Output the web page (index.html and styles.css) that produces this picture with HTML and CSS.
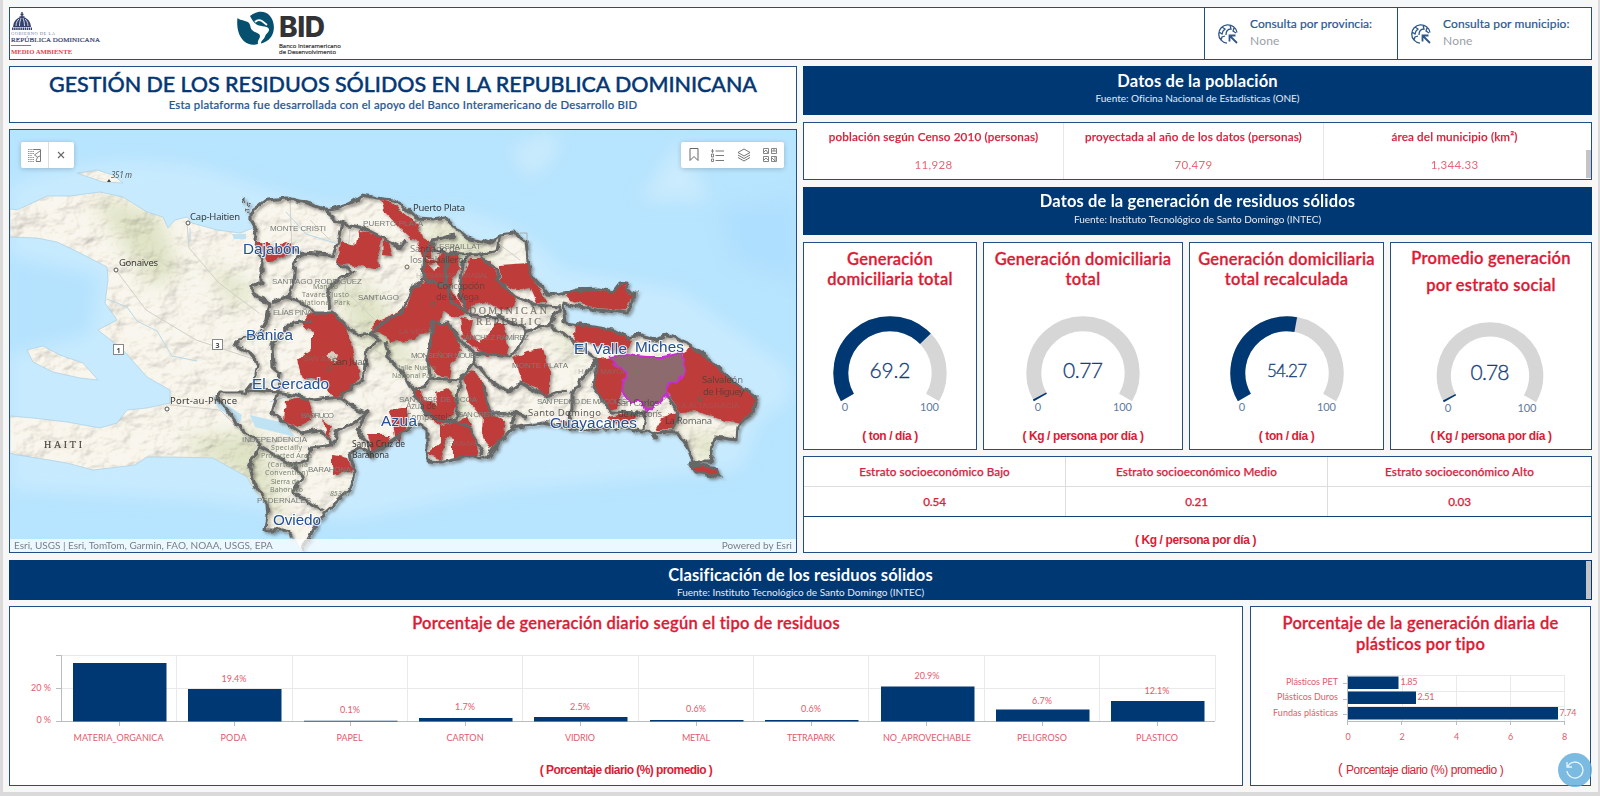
FILE: index.html
```html
<!DOCTYPE html>
<html lang="es">
<head>
<meta charset="utf-8">
<title>Gestión de los residuos sólidos</title>
<link rel="stylesheet" href="styles.css">
</head>
<body>
<div class="page">
  <header class="panel header">
    <div class="logos">
      <div class="gov">
        <svg class="dome" width="22" height="19" viewBox="0 0 22 19"><path d="M11 0v6M9.500 2.500h3M8.500 5h5" stroke="#34406f" stroke-width="1.400"/><path d="M2 15a9 10 0 0 1 18 0z" fill="#34406f"/><path d="M5 14c0-4 2-6 3-7M8.500 14c0-4 1-6 1.500-8M13.500 14c0-4-1-6-1.500-8M17 14c0-4-2-6-3-7" stroke="#fff" stroke-width=".8" fill="none"/><path d="M1 16.800h20" stroke="#34406f" stroke-width="2.400" stroke-dasharray="1.500 .6"/></svg>
        <div class="gov-a">GOBIERNO DE LA</div>
        <div class="gov-b">REPÚBLICA DOMINICANA</div>
        <div class="gov-line"></div>
        <div class="gov-c">MEDIO AMBIENTE</div>
      </div>
      <div class="bid">
        <svg width="38" height="36" viewBox="0 0 38 36"><path d="M.5 7C4 10 9 9 12 12c2 3 1 5 3 7 3 3 8 3 8 6 0 3-3 4-2 8-9 3-17-3-19.500-12C0 16 0 11 .5 7z" fill="#05506f"/><path d="M13 5C19 0 28-1 33 5c5 6 5 15 1 21-3 4-7 6-10 6.500 0-3 3-4 4-7 1-3 4-4 4-7 0-2-3-3-5-3l-5-1c-4-1-6-4-9-9.500z" fill="#05506f"/><path d="M18 11c2-2 5-2 7-1l5 4" stroke="#fff" stroke-width="1.800" fill="none"/></svg>
        <div class="bid-text"><div class="bid-name">BID</div><div class="bid-sub">Banco Interamericano<br>de Desenvolvimento</div></div>
      </div>
    </div>
    <div class="query q1">
      <svg class="globe" width="22" height="22" viewBox="0 0 22 22"><use href="#globe"/></svg>
      <div><div class="q-label">Consulta por provincia:</div><div class="q-value">None</div></div>
    </div>
    <div class="query q2">
      <svg class="globe" width="22" height="22" viewBox="0 0 22 22"><use href="#globe"/></svg>
      <div><div class="q-label">Consulta por municipio:</div><div class="q-value">None</div></div>
    </div>
  </header>

  <main class="middle">
    <section class="left">
      <div class="panel title">
        <h1>GESTIÓN DE LOS RESIDUOS SÓLIDOS EN LA REPUBLICA DOMINICANA</h1>
        <p>Esta plataforma fue desarrollada con el apoyo del Banco Interamericano de Desarrollo BID</p>
      </div>
      <div class="panel map">
        <svg class="map-art" width="786" height="422" viewBox="10 130 786 422">
          <defs>
            <g id="globe" fill="none" stroke="#2f5687" stroke-width="1.300"><path d="M20 9.500A9.200 9.200 0 1 0 10 20.200M5 4l3 2-2 2-1 3-3-2M4 17l1-3 3-1M9 12c0-4 2-6 5-6l-1-4M17 5l-1 3 3 2"/><path d="M13 13l7 7M12.500 18.500v-6h6" stroke-width="1.800"/></g>
            <filter id="relief" x="0" y="0" width="100%" height="100%">
              <feTurbulence type="fractalNoise" baseFrequency=".035 .045" numOctaves="4" seed="8"/>
              <feDiffuseLighting surfaceScale="7" lighting-color="#fffaf0" diffuseConstant="1.180"><feDistantLight azimuth="225" elevation="58"/></feDiffuseLighting>
            </filter>
            <filter id="rough" x="-5%" y="-5%" width="110%" height="110%"><feTurbulence type="fractalNoise" baseFrequency=".11" numOctaves="2" seed="3"/><feDisplacementMap in="SourceGraphic" scale="7" xChannelSelector="R" yChannelSelector="G"/></filter>
            <filter id="soft"><feGaussianBlur stdDeviation="9"/></filter>
            <path id="land" d="M10 209L17 210 30 204 47 196 70 196 100 192 123 197 147 212 163 217 168 228 175 220 187 217 192 223 217 230 240 233 253 228 250 213 267 200 287 198 303 202 328 210 350 203 362 195 377 198 393 200 405 207 417 218 433 219 445 217 455 228 467 237 490 243 500 235 513 233 526 240 528 260 533 277 547 294 560 295 577 290 600 289 613 292 620 283 627 283 626 290 635 292 633 302 627 313 597 310 563 304 565 323 587 326 613 330 627 337 637 335 655 340 667 334 687 343 707 357 733 382 757 397 753 410 738 427 737 440 715 437 710 462 693 462 687 447 677 433 643 432 630 428 587 430 567 427 543 422 513 427 497 445 488 458 460 457 440 462 428 461 427 448 427 430 418 423 407 430 383 447 370 455 360 448 350 453 355 473 347 493 325 513 313 530 302 551 293 537 283 530 265 530 267 507 250 483 247 477 213 458 173 457 147 457 135 465 93 470 67 463 37 458 17 455 10 453V416L33 418 67 422 100 428 117 423 127 410 147 408 170 403 170 390 147 377 123 350 98 330 117 320 105 303 108 280 107 267 80 253 57 242 37 238 10 237z"/>
            <clipPath id="landclip"><use href="#land"/><path d="M27 350L43 346 60 355 83 363 98 380 80 378 53 372 33 362zM77 173L97 170 113 175 123 183 103 182z"/></clipPath>
          </defs>
          <rect x="10" y="130" width="786" height="422" fill="#b7e4fe"/>
          <g filter="url(#soft)">
            <path d="M10 185Q130 140 240 180T460 210Q540 230 560 270L680 290 790 370V400L760 420 740 470 500 490 350 520 200 500 10 490z" fill="#cdecfd" opacity=".75"/>
            <path d="M640 200l40-60 30 60zM510 150l40-20 10 20-30 30z" fill="#d3eefc" opacity=".7"/>
            <path d="M720 210l76-10v80l-60-20zM10 255l90 20-10 60-80 20z" fill="#a8dcfd" opacity=".6"/>
          </g>
          <g clip-path="url(#landclip)">
            <rect x="10" y="130" width="786" height="422" fill="#f8f6ef"/>
            <g filter="url(#soft)" fill="#d4dcb8" opacity=".7">
              <path d="M90 195l70 20 20 60-30 10zM205 260l50 30-20 20zM180 440l80-10 30 110-50-60zM330 275l50 20 40 80-60-30zM410 215l70 20 20 30-50-10zM550 300l30 60-20-10zM440 370l30 40-20 30zM680 430l50 10-20 30zM350 205l60 40z"/>
            </g>
            <rect x="10" y="130" width="786" height="422" filter="url(#relief)" style="mix-blend-mode:multiply" opacity=".36"/>
            <path d="M212 395l30 20-2 8-22-15zM250 415l35 8 10 14-40-10zM232 234l14 0 0 5-12 0z" fill="#c0e3f4"/>
          </g>
          <use href="#land" fill="none" stroke="#a9cfe2" stroke-width=".7"/>
          <path d="M27 350L43 346 60 355 83 363 98 380 80 378 53 372 33 362zM77 173L97 170 113 175 123 183 103 182z" fill="none" stroke="#a9cfe2" stroke-width=".7"/>
          <g fill="none" stroke="#b9d9e8" stroke-width="1"><path d="M107 299l20 8 10 14 20 10 15 25 25 5M286 212l20 22 32 10M450 260l40 20M590 300v10M270 402l30-10M190 228v14"/></g>
          <g fill="none" stroke="#d2d1ca" stroke-width="1"><path d="M187 223l2 25 30 35 40 30M116 270l30 40 50 30 60 20M170 405l50 5 40 40M290 200l2 50M310 220l20 20M350 230l-5 60 30 30M470 370l40 20M500 245l20 15M375 350l30 20"/></g>

          <g class="cast">
          <g fill="#be3d3b" filter="url(#rough)">
            <path d="M255 242H267L273 247 288 242 297 248 283 257 267 262 263 253zM340 242L357 245 360 230 382 238 378 250 380 267 367 268 337 263zM383 240L388 242 392 257 382 256z"/>
            <path d="M380 200L390 202 403 212 417 223 423 237 433 242 432 257 422 257 417 243 400 228 383 210z"/>
            <path fill-rule="evenodd" d="M437 260L440 252 458 255 460 267 449 287 460 303 467 313 450 317 443 313 440 323 432 323 430 332 407 340 390 342 383 335 372 330 373 323 407 307 413 287 423 283 423 257zM428 263L434 270 441 267 436 262z"/>
            <path d="M470 260L490 260 497 277 507 288 515 297 513 307 500 310 487 302 473 305 468 313 458 297 463 277zM500 265L528 263 532 277 548 303 537 303 530 287 517 290 500 283zM565 293L583 288 610 292 623 283 627 292 635 293 625 310 597 308 573 302z"/>
            <path d="M460 317L473 320 470 333 480 343 497 323 503 323 508 347 507 355 487 357 473 347 462 337zM433 323L448 322 457 337 462 350 453 360 450 377 437 375 428 363 428 347z"/>
            <path d="M300 322L313 313 333 313 347 327 353 353 360 377 347 393 333 397 327 390 328 381 302 378 297 360 312 350 312 333zM285 400L307 398 313 407 310 420 297 427 283 420zM323 420L332 427 328 438zM333 455L348 458 353 470 333 475zM368 435L390 435 387 443 373 453zM390 410L407 407 407 427 400 440 394 437z"/>
            <path d="M463 377L473 370 487 387 487 410 507 423 503 437 490 450 482 433 483 417 470 403zM440 427L467 417 473 433 478 457 453 457 453 439 447 437 440 460 428 453 440 443zM413 390L422 390 424 400 438 405 435 393 447 388 457 400 453 413 440 427 424 414z"/>
            <path d="M513 358L527 352 543 350 550 370 550 393 543 398 537 388 522 382 518 367zM575 325L613 330 633 340 627 353 600 345 573 341zM597 360L613 358 627 373 622 390 617 408 607 410 593 387zM607 417L640 412 630 424 614 422zM683 355L690 345 707 357 733 382 757 397 753 410 743 424 727 422 700 412 680 413 668 393 670 383 678 382 686 370zM677 413L674 430 655 430 662 418zM690 463L717 468 720 477 697 472zM557 420l9 0 2 10z"/>
          </g>
          <path d="M326 356l7-6 5 6-3 8z" fill="#d8cdbf" filter="url(#rough)"/>

          <g filter="url(#rough)" fill="none" stroke="#666867" stroke-width="3.100" stroke-linejoin="round">
            <path d="M250 220L250 213 267 200 287 198 303 202 328 210 350 203 362 195 377 198 393 200 405 207 417 218 433 219 445 217 455 228 467 237 490 243 500 235 513 233 526 240 528 260 533 277 547 294 560 295 577 290 600 289 613 292 620 283 627 283 626 290 635 292 633 302 627 313 597 310 563 304 565 323 587 326 613 330 627 337 637 335 655 340 667 334 687 343 707 357 733 382 757 397 753 410 738 427 737 440 715 437 710 462 693 462 687 447 677 433 643 432 630 428 587 430 567 427 543 422 513 427 497 445 488 458 460 457 440 462 428 461 427 448 427 430 418 423 407 430 383 447 370 455 360 448 350 453 355 473 347 493 325 513 313 530 302 551M293 537L283 530 265 530 268 517 267 503 255 487 250 467 260 443 235 423 230 413 217 398 220 393 245 393 255 380 258 363 250 352 235 345 240 340 260 333 267 320 270 303 257 297 250 288 262 282 262 263 255 240 257 230 250 220"/>
            <path d="M263 253L297 250 302 253 333 255 338 243 342 223 330 217 328 208M342 223L363 228 383 238 400 247 407 240M302 253L295 263 293 283 288 297 272 302M288 297L310 307 315 313 333 313 345 325 358 335 370 333 390 317 402 312 413 287 423 280 425 253 433 240 455 235M337 263L353 272 333 283 328 290 330 310M310 320L293 322 283 333 272 345 273 367 280 373 278 392M247 390L278 392 313 400 340 397 363 380 367 350 380 340 370 333M278 392L272 413 300 433 320 430 333 445 310 448 307 460 293 465 303 477 293 493 323 510M260 447L293 465M340 397L353 407 367 413 337 433 333 445M367 413L357 430 368 443 370 455M385 340L390 360 402 373 412 390 425 385 430 378 428 360 430 347 433 323 448 322 457 337 463 343 475 353 510 357 520 347 525 332 548 325 560 308M433 240L435 250 447 253 480 255 497 250 500 235M447 253L445 280 453 303 472 316 500 317 523 327 525 332M472 253L463 263 460 290 468 313M480 257L498 270 497 280 515 296 537 305 560 307M423 280L445 285M548 325L563 333 573 342 598 360 580 380 572 393 572 410 567 427M598 360L593 387 610 412 647 413M475 362L490 380 507 392 520 383 547 397 567 390M475 362L460 380 457 400 457 420 472 430 482 455M430 378L460 380M412 390L425 413 443 423 457 420M483 383L487 400 490 413 515 412 527 418M515 412L513 425M667 395L678 413 673 430M645 413L643 430M475 362V353M690 463L717 468 720 477 697 472z"/>
            <circle cx="243" cy="201" r=".6"/><circle cx="249" cy="204" r=".6"/><circle cx="247" cy="210" r=".5"/><path d="M653 434l4 6"/>
          </g>
          </g>
          <path d="M610 357L627 355 647 357 663 357 682 353 686 370 678 382 670 383 667 395 647 413 643 402 630 402 622 392 627 373 613 362z" fill="#8d6a6d" stroke="#c62fd0" stroke-width="2" filter="url(#rough)"/>
          <path d="M520 233h7v7" fill="none" stroke="#aaa"/>

          <g class="prov">
            <text x="270" y="231" textLength="56">MONTE CRISTI</text><text x="363" y="226" textLength="60">PUERTO PLATA</text><text x="272" y="284" textLength="90">SANTIAGO RODRÍGUEZ</text><text x="358" y="300" textLength="41">SANTIAGO</text><text x="273" y="315" textLength="39">ELÍAS PIÑA</text><text x="439" y="249" textLength="42">ESPAILLAT</text><text x="416" y="278" textLength="73" opacity=".4">HERMANAS MIRABAL</text><text x="460" y="340" textLength="69">SÁNCHEZ RAMÍREZ</text><text x="411" y="358" textLength="68">MONSEÑOR NOUEL</text><text x="512" y="368" textLength="56">MONTE PLATA</text><text x="578" y="374" textLength="50" opacity=".6">HATO MAYOR</text><text x="537" y="404" textLength="90">SAN PEDRO DE MACORÍS</text><text x="301" y="418" textLength="33">BAORUCO</text><text x="242" y="442" textLength="65">INDEPENDENCIA</text><text x="308" y="472" textLength="43">BARAHONA</text><text x="257" y="503" textLength="54">PEDERNALES</text><text x="399" y="402" textLength="78">SAN JOSÉ DE OCOA</text><text x="458" y="417" textLength="54">SAN CRISTÓBAL</text><text x="303" y="361" textLength="36" opacity=".4">SAN JUAN</text><text x="677" y="408" textLength="62" opacity=".35">LA ALTAGRACIA</text><text x="399" y="334" textLength="33" opacity=".4">LA VEGA</text><text x="443" y="446" textLength="32" opacity=".4">PERAVIA</text>
          </g>
          <g class="park">
            <text x="313" y="289">Manolo</text><text x="302" y="297" textLength="47">Tavarez Justo</text><text x="301" y="305" textLength="49">National Park</text><text x="396" y="370" textLength="40">Valle Nuevo</text><text x="392" y="378" textLength="45">National Park</text><text x="271" y="450" textLength="31">Specially</text><text x="261" y="458" textLength="51">Protected Area</text><text x="268" y="467" textLength="40">(Cartagena</text><text x="265" y="475" textLength="43">Convention)</text><text x="271" y="484" textLength="29">Sierra de</text><text x="270" y="492" textLength="33">Bahoruco</text><text x="330" y="496" font-style="italic">853 m</text>
          </g>
          <g class="city">
            <text x="190" y="220" textLength="50">Cap-Haitien</text><text x="119" y="266" textLength="39">Gonaives</text><text x="413" y="211" textLength="52">Puerto Plata</text><text x="170" y="404" textLength="67">Port-au-Prince</text><text class="elev" x="111" y="178" textLength="21">351 m</text>
            <text x="332" y="365" textLength="36" opacity=".7">San Juan</text><text x="528" y="416" textLength="73" opacity=".8">Santo Domingo</text><text x="665" y="424" textLength="47" opacity=".75">La Romana</text><text x="702" y="383" textLength="41" opacity=".65">Salvaleón</text><text x="703" y="395" textLength="41" opacity=".65">de Higuey</text><text x="616" y="406" textLength="43" opacity=".65">San Carlos</text><text x="618" y="417" textLength="44" opacity=".65">de Macorís</text><text x="410" y="252" textLength="50" opacity=".6">Santiago de</text><text x="410" y="263" textLength="58" opacity=".6">los Caballeros</text><text x="437" y="289" textLength="48" opacity=".55">Concepción</text><text x="436" y="300" textLength="43" opacity=".55">de la Vega</text><text class="sm" x="352" y="447" textLength="53">Santa Cruz de</text><text class="sm" x="352" y="458" textLength="37">Barahona</text><text class="sm" x="406" y="409" textLength="30" opacity=".6">Azua de</text><text class="sm" x="406" y="420" textLength="46" opacity=".6">Compostela</text>
          </g>
          <g fill="#fff" stroke="#555" stroke-width="1"><circle cx="188" cy="223" r="2"/><circle cx="116" cy="270" r="2"/><circle cx="167" cy="409" r="2"/></g><path d="M107 182l2-3 2 3z" fill="#444"/>
          <g fill="none" stroke="#665"><circle cx="407" cy="267" r="2"/><circle cx="433" cy="304" r="2"/><circle cx="329" cy="369" r="2"/><circle cx="700" cy="399" r="2"/></g>
          <g class="route"><rect x="113.500" y="344.500" width="10" height="10"/><rect x="212.500" y="339.500" width="10" height="10"/><text x="116.500" y="352.500">1</text><text x="215.500" y="347.500">3</text></g>
          <g class="country"><text x="44" y="448" textLength="38">HAITI</text><text x="469" y="314" textLength="78" opacity=".7">DOMINICAN</text><text x="476" y="325" textLength="65" opacity=".7">REPUBLIC</text></g>
          <g class="muni"><text x="243" y="254" textLength="57">Dajabón</text><text x="246" y="340" textLength="47">Bánica</text><text x="252" y="389" textLength="77">El Cercado</text><text x="381" y="426" textLength="36">Azua</text><text x="273" y="525" textLength="48">Oviedo</text><text x="574" y="354" textLength="53">El Valle</text><text x="635" y="352" textLength="49">Miches</text><text x="550" y="428" textLength="87">Guayacanes</text></g>
        </svg>
        <div class="tool tool-left">
          <svg width="13" height="13" viewBox="0 0 13 13" fill="none" stroke="#777"><path d="M6 .5h6.500v12H8"/><path d="M.8 0v13M3 0v13M5.200 0v5M5.200 8v5" stroke-dasharray="1 1" stroke-width="1.200"/><path d="M12 2L6.500 6l3 2-1.500 4M9.500 8L12 7" stroke-width=".9"/></svg>
          <i></i>
          <svg width="8" height="8" viewBox="0 0 8 8" stroke="#666" stroke-width="1.100"><path d="M1 1l6 6M7 1L1 7"/></svg>
        </div>
        <div class="tool tool-right">
          <svg width="10" height="14" viewBox="0 0 10 14" fill="none" stroke="#666"><path d="M1 .5h8v12l-4-4-4 4z"/></svg>
          <svg width="13" height="13" viewBox="0 0 13 13" fill="none" stroke="#777"><path d="M4.500 2H13M4.500 6.500H13M4.500 11.500H13"/><path d="M1.500 0v4M0 2h3M.5 5h2v3h-2zM.5 10h2v2.500h-2z" stroke-width=".9"/></svg>
          <svg width="14" height="14" viewBox="0 0 14 14" fill="none" stroke="#666" stroke-width=".9"><path d="M7 1l6 3.500L7 8 1 4.500zM1 7l6 3.500L13 7M1 9.500L7 13l6-3.500"/></svg>
          <svg width="14" height="14" viewBox="0 0 14 14" fill="none" stroke="#777" stroke-width=".9"><path d="M.5.500h5v5h-5zM8.500.500h5v5h-5zM.5 8.500h5v5h-5zM8.500 8.500h5v5h-5zM1 4l2-2 2 3M9 3h4M11 1v2M1 12l2-2 2 2M9 10l3 3M12 9v4"/></svg>
        </div>
        <div class="attrib"><span>Esri, USGS | Esri, TomTom, Garmin, FAO, NOAA, USGS, EPA</span><span>Powered by Esri</span></div>
      </div>
    </section>

    <section class="right">
      <div class="banner b1"><h2>Datos de la población</h2><p>Fuente: Oficina Nacional de Estadísticas (ONE)</p></div>
      <div class="panel people">
        <div><b>población según Censo 2010 (personas)</b><span>11,928</span></div>
        <div><b>proyectada al año de los datos (personas)</b><span>70,479</span></div>
        <div><b>área del municipio (km²)</b><span>1,344.33</span></div>
        <i class="thumb"></i>
      </div>
      <div class="banner b2"><h2>Datos de la generación de residuos sólidos</h2><p>Fuente: Instituto Tecnológico de Santo Domingo (INTEC)</p></div>
      <div class="gauges">
        <div class="panel gauge">
          <h3>Generación<br>domiciliaria total</h3>
          <svg width="150" height="106" viewBox="-75 -62 150 106"><path class="track" d="M-42.600 24.600A49.200 49.200 0 1 1 42.600 24.600" pathLength="100"/><path class="fill" d="M-42.600 24.600A49.200 49.200 0 1 1 42.600 24.600" pathLength="100" stroke-dasharray="69.200 100"/><text class="val" x="0" y="4.500" textLength="41">69.2</text><text class="lim" x="-45" y="37.500">0</text><text class="lim" x="39.500" y="37.500" textLength="19">100</text></svg>
          <p>( ton / día )</p>
        </div>
        <div class="panel gauge">
          <h3>Generación domiciliaria<br>total</h3>
          <svg width="150" height="106" viewBox="-75 -62 150 106"><path class="track" d="M-42.600 24.600A49.200 49.200 0 1 1 42.600 24.600" pathLength="100"/><path class="fill" d="M-42.600 24.600A49.200 49.200 0 1 1 42.600 24.600" pathLength="100" stroke-dasharray=".9 100"/><text class="val" x="0" y="4.500" textLength="40">0.77</text><text class="lim" x="-45" y="37.500">0</text><text class="lim" x="39.500" y="37.500" textLength="19">100</text></svg>
          <p>( Kg / persona por día )</p>
        </div>
        <div class="panel gauge">
          <h3>Generación domiciliaria<br>total recalculada</h3>
          <svg width="150" height="106" viewBox="-75 -62 150 106"><path class="track" d="M-42.600 24.600A49.200 49.200 0 1 1 42.600 24.600" pathLength="100"/><path class="fill" d="M-42.600 24.600A49.200 49.200 0 1 1 42.600 24.600" pathLength="100" stroke-dasharray="54.270 100"/><text class="val small" x="0" y="4" textLength="40">54.27</text><text class="lim" x="-45" y="37.500">0</text><text class="lim" x="39.500" y="37.500" textLength="19">100</text></svg>
          <p>( ton / día )</p>
        </div>
        <div class="panel gauge tall">
          <h3>Promedio generación<br>por estrato social</h3>
          <svg width="150" height="106" viewBox="-75 -64.600 150 106"><path class="track t4" d="M-40 23.100A46.200 46.200 0 1 1 40 23.100" pathLength="100"/><path class="fill t4" d="M-40 23.100A46.200 46.200 0 1 1 40 23.100" pathLength="100" stroke-dasharray=".9 100"/><text class="val" x="0" y="4.500" textLength="39">0.78</text><text class="lim" x="-42" y="36">0</text><text class="lim" x="37" y="36" textLength="19">100</text></svg>
          <p>( Kg / persona por día )</p>
        </div>
      </div>
      <div class="panel strata">
        <div class="row"><span>Estrato socioeconómico Bajo</span><span>Estrato socioeconómico Medio</span><span>Estrato socioeconómico Alto</span></div>
        <div class="row nums"><span>0.54</span><span>0.21</span><span>0.03</span></div>
        <p>( Kg / persona por día )</p>
      </div>
    </section>
  </main>

  <div class="banner b3"><h2>Clasificación de los residuos sólidos</h2><p>Fuente: Instituto Tecnológico de Santo Domingo (INTEC)</p><i class="thumb"></i></div>

  <div class="bottom">
    <div class="panel chart c1">
      <h3>Porcentaje de generación diario según el tipo de residuos</h3>
      <svg width="1232" height="110" viewBox="10 640 1232 110">
        <g class="grid"><path d="M61 655.500H1215.500M61 688.500H1215.500M176.500 655v66M292.500 655v66M407.500 655v66M522.500 655v66M638.500 655v66M753.500 655v66M868.500 655v66M984.500 655v66M1099.500 655v66M1215.500 655v66"/></g>
        <path class="axis" d="M61.500 655v67M56 655.500h5M56 688.500h5M56 721.500H1215M119.500 722v4M234.500 722v4M350.500 722v4M465.500 722v4M580.500 722v4M696.500 722v4M811.500 722v4M926.500 722v4M1042.500 722v4M1157.500 722v4"/>
        <g fill="#003874"><path d="M73 663h93.500v58.500H73zM188 689h93.500v32.500H188zM304 720.800h93.500v.7H304zM419 718h93.500v3.500H419zM534 717h93.500v4.500H534zM650 720h93.500v1.500H650zM765 720h93.500v1.500H765zM881 686.500h93.500v35H881zM996 709.500h93.500v12H996zM1111 701h93.500v20.500H1111z"/></g>
        <g class="lbl">
          <text x="51" y="690.500" text-anchor="end" class="end" textLength="20">20 %</text><text x="51" y="723" class="end" textLength="14.500">0 %</text>
          <text x="234" y="682" textLength="25">19.4%</text><text x="350" y="713" textLength="20">0.1%</text><text x="465" y="710" textLength="20">1.7%</text><text x="580" y="710" textLength="20">2.5%</text><text x="696" y="712" textLength="20">0.6%</text><text x="811" y="712" textLength="20">0.6%</text><text x="927" y="679" textLength="25">20.9%</text><text x="1042" y="704" textLength="20">6.7%</text><text x="1157" y="694" textLength="25">12.1%</text>
          <text x="118.500" y="740.500" textLength="90">MATERIA_ORGANICA</text><text x="233.500" y="740.500" textLength="26">PODA</text><text x="349.500" y="740.500" textLength="26">PAPEL</text><text x="465" y="740.500" textLength="37">CARTON</text><text x="580" y="740.500" textLength="30">VIDRIO</text><text x="696" y="740.500" textLength="28">METAL</text><text x="811" y="740.500" textLength="48">TETRAPARK</text><text x="927" y="740.500" textLength="88">NO_APROVECHABLE</text><text x="1042" y="740.500" textLength="50">PELIGROSO</text><text x="1157" y="740.500" textLength="42">PLASTICO</text>
        </g>
      </svg>
      <p>( Porcentaje diario (%) promedio )</p>
    </div>
    <div class="panel chart c2">
      <h3>Porcentaje de la generación diaria de<br>plásticos por tipo</h3>
      <svg width="339" height="80" viewBox="1251 665 339 80">
        <g class="grid"><path d="M1348 675.500H1565M1348 691.500H1565M1348 706.500H1565M1402.500 675v46M1456.500 675v46M1510.500 675v46M1564.500 675v46"/></g>
        <path class="axis" d="M1347.500 675v50M1343 683.500h4M1343 699.500h4M1343 714.500h4M1347 721.500H1565M1401.500 721v4M1456.500 721v4M1510.500 721v4M1564.500 721v4"/>
        <path fill="#003874" d="M1348 676.500h50.500v12.500H1348zM1348 691.500h68v12.500H1348zM1348 707h210v12.500H1348z"/>
        <g class="lbl"><text x="1338" y="684.500" class="end" textLength="52">Plásticos PET</text><text x="1338" y="700" class="end" textLength="61">Plásticos Duros</text><text x="1338" y="715.500" class="end" textLength="65">Fundas plásticas</text><text x="1409" y="684.500" textLength="17">1.85</text><text x="1426" y="700" textLength="17">2.51</text><text x="1568" y="715.500" textLength="17">7.74</text><text x="1348" y="739.500">0</text><text x="1402" y="739.500">2</text><text x="1456.500" y="739.500">4</text><text x="1510.500" y="739.500">6</text><text x="1564.500" y="739.500">8</text></g>
      </svg>
      <p><em>(</em> Porcentaje diario (%) promedio )</p>
    </div>
  </div>
  <div class="reset"><svg width="20" height="20" viewBox="0 0 20 20" fill="none" stroke="#e9f5fc" stroke-width="1.300"><path d="M3 6a8 8 0 1 1-1 5M2 2v5h5"/></svg></div>
</div>
</body>
</html>
```
FILE: styles.css
```css
* { box-sizing: border-box; margin: 0; padding: 0; }
body { background: #d9dad9; font-family: Lato, "Open Sans", sans-serif; font-variant-ligatures: none; color: #15407a; overflow: hidden; }
h1, h2, h3 { white-space: nowrap; text-align: center; }
.page { position: relative; width: 1595px; height: 792px; margin-left: 3px; padding: 7px 3px 0 6px; background: #f7f7f8; }
.panel { background: #fff; border: 1px solid #234f85; }

.header { width: 1583px; height: 53px; display: grid; grid-template-columns: 1194px 193px 194px; }
.logos { display: flex; padding-left: 1px; }
.gov { width: 226px; padding-top: 4px; font-family: "Liberation Serif", serif; white-space: nowrap; }
.dome { display: block; }
.gov-a { font-size: 4.500px; line-height: 6px; letter-spacing: .5px; color: #7580a0; }
.gov-b { font-size: 7px; line-height: 7px; letter-spacing: .15px; color: #34406f; -webkit-text-stroke: .2px #34406f; }
.gov-line { width: 20px; border-top: 1px solid #e0525e; margin: 1px 0 2px; }
.gov-c { font-size: 6.700px; line-height: 7px; font-weight: bold; color: #e3404c; }
.bid { display: flex; gap: 4px; padding-top: 3px; }
.bid-name { font: 800 28px/31px Inter, sans-serif; letter-spacing: -.4px; color: #333336; height: 30px; margin-top: 1px; }
.bid-sub { font: 5.900px/6px "Open Sans", sans-serif; white-space: nowrap; color: #333; margin-top: 1px; letter-spacing: .05px; -webkit-text-stroke: .2px #333; }
.query { display: flex; gap: 11px; padding: 7px 0 0 12px; border-left: 1px solid #234f85; }
.globe { margin-top: 8px; }
.q-label { font-size: 12px; line-height: 17px; letter-spacing: .1px; color: #2a568f; white-space: nowrap; }
.q1 .q-label { letter-spacing: .05px; }
.q-label, .title p { -webkit-text-stroke: .2px #2a568f; }
.q-value { font-size: 12px; line-height: 17px; letter-spacing: .2px; color: #98a0a8; }

.middle { display: grid; grid-template-columns: 788px 789px; gap: 6px; margin-top: 6px; }
.title { height: 57px; padding-top: 4px; text-align: center; }
.title h1 { font-size: 21.500px; line-height: 27px; font-weight: 500; letter-spacing: -.05px; color: #043774; -webkit-text-stroke: .4px #043774; }
.title p { font-size: 11.300px; line-height: 14px; font-weight: 500; letter-spacing: .25px; color: #2a568f; white-space: nowrap; }
.map { position: relative; margin-top: 6px; height: 424px; overflow: hidden; }
.map-art { display: block; }
.cast { filter: drop-shadow(2px 2px 1.500px rgba(60,55,50,.5)); }
.prov { font: 8px "Liberation Sans", sans-serif; fill: #777b77; }
.park { font: 7px "Noto Sans", sans-serif; fill: #7c8570; }
.city { font: 9.500px "Noto Sans", sans-serif; fill: #3a3a38; }
.city .sm { font-size: 8.500px; }
.city .elev { font-size: 8px; font-style: italic; fill: #555; }
.route { font: bold 7px "Noto Sans", sans-serif; fill: #444; }
.route rect { fill: #fff; stroke: #888; }
.country { font: 10px "Liberation Serif", serif; fill: #4d4a45; stroke: #4d4a45; stroke-width: .2px; }
.muni { font: 15.300px "Liberation Sans", sans-serif; fill: #234f93; stroke: #fff; stroke-width: 2px; stroke-opacity: .8; paint-order: stroke; }
.tool { position: absolute; top: 12px; height: 26px; background: #fff; border-radius: 2px; display: flex; align-items: center; box-shadow: 0 1px 5px rgba(0,0,0,.2); }
.tool-left { left: 11px; width: 53px; padding: 0 9px 0 7px; justify-content: space-between; }
.tool-left i { width: 1px; height: 26px; background: #ddd; margin-left: -2px; }
.tool-right { right: 12px; width: 103px; padding: 0 7px 0 8px; justify-content: space-between; }
.attrib { position: absolute; left: 0; right: 0; bottom: 0; height: 13px; display: flex; justify-content: space-between; padding: 0 4px; background: rgba(255,255,255,.72); font-size: 10px; line-height: 12px; color: #7a7f84; }

.banner { position: relative; background: #003874; color: #fff; text-align: center; white-space: nowrap; }
.banner h2 { font-size: 16.500px; font-weight: 700; line-height: 20px; letter-spacing: .13px; }
.banner p { font-size: 10px; line-height: 14px; color: #e6edf5; }
.b1 { height: 49px; padding-top: 5px; }
.people { position: relative; height: 58px; margin-top: 7px; display: grid; grid-template-columns: 259px 260px 1fr; padding-right: 6px; text-align: center; white-space: nowrap; }
.people div { padding-top: 4px; border-left: 1px solid #e6e6e6; }
.people div:first-child { border: 0; }
.people b, .people span { display: block; line-height: 18px; }
.people b { font-size: 11.700px; font-weight: 500; letter-spacing: .16px; color: #d8233d; -webkit-text-stroke: .25px #d8233d; }
.people span { margin-top: 11px; font-size: 11.500px; letter-spacing: .3px; color: #ec6473; }
.thumb { position: absolute; right: 0; bottom: 1px; width: 5px; height: 28px; background: #c4c4c6; }
.b2 { height: 48px; margin-top: 7px; padding-top: 4px; }
.b2 p { margin-top: 1px; }
.gauges { display: grid; grid-template-columns: 174px 200px 195px 202px; gap: 6px; margin-top: 7px; height: 208px; }
.gauge { text-align: center; padding-top: 6px; }
.gauge h3 { height: 62px; font-size: 16.500px; line-height: 20px; }
.gauge h3, .chart h3 { font-weight: 600; letter-spacing: .24px; color: #dc1b36; -webkit-text-stroke: .3px #dc1b36; }
.gauge.tall h3 { line-height: 27px; margin-top: -4px; height: 66px; }
.gauge svg { display: block; margin: 0 auto; }
.tall svg { position: relative; left: -1px; }
.track, .fill { fill: none; stroke-width: 15; stroke: #d6d6d6; }
.fill { stroke: #003874; }
.t4 { stroke-width: 14.200; }
.val { font-size: 21px; font-weight: 300; fill: #15407a; stroke: #15407a; stroke-width: .3px; text-anchor: middle; }
.val.small { font-size: 17px; }
.lim { font-size: 11px; fill: #5d7ba0; text-anchor: middle; }
.gauge p, .strata p, .c1 p { font: bold 12px/16px "Liberation Sans", sans-serif; color: #dc1b36; }
.gauge p { margin-top: 11px; letter-spacing: -.4px; }
.strata { margin-top: 6px; height: 97px; text-align: center; }
.row { display: grid; grid-template-columns: 261px 262px 1fr; height: 30px; font-size: 11.700px; font-weight: 500; line-height: 28px; letter-spacing: .08px; color: #d8233d; border-bottom: 1px solid #ddd; -webkit-text-stroke: .25px #d8233d; }
.row span + span { border-left: 1px solid #ddd; }
.nums { border-bottom-color: #123f72; letter-spacing: -.1px; }
.strata p { padding: 15px 4px 0 0; letter-spacing: -.4px; }
.b3 { width: 1583px; height: 40px; margin-top: 7px; padding-top: 5px; }
.b3 .thumb { height: 38px; right: 1px; bottom: 1px; }
.b3 p { margin-top: 0; }
.bottom { display: grid; grid-template-columns: 1234px 341px; gap: 7px; margin-top: 6px; height: 180px; }
.chart { text-align: center; padding-top: 6px; }
.chart h3 { font-size: 16.500px; line-height: 20px; }
.chart svg { display: block; }
.c1 svg { margin-top: 7px; }
.c1 h3 { height: 20px; }
.c1 p { margin-top: 12px; letter-spacing: -.58px; }
.c2 h3 { line-height: 20.500px; height: 52px; }
.c2 p { margin-top: 15px; font: 12px/18px "Liberation Sans", sans-serif; letter-spacing: -.53px; word-spacing: .3px; color: #dc1b36; }
.c2 em { font-style: normal; font-size: 14px; margin-right: 1px; }
.grid path { stroke: #e9e9ea; fill: none; }
.axis { stroke: #b9bdc2; fill: none; }
.lbl { font-size: 9px; fill: #e25b6b; text-anchor: middle; }
.lbl .end { text-anchor: end; }
.reset { position: absolute; right: 6px; bottom: 5px; width: 34px; height: 34px; border-radius: 50%; background: rgba(100,175,220,.85); display: flex; align-items: center; justify-content: center; }
```
